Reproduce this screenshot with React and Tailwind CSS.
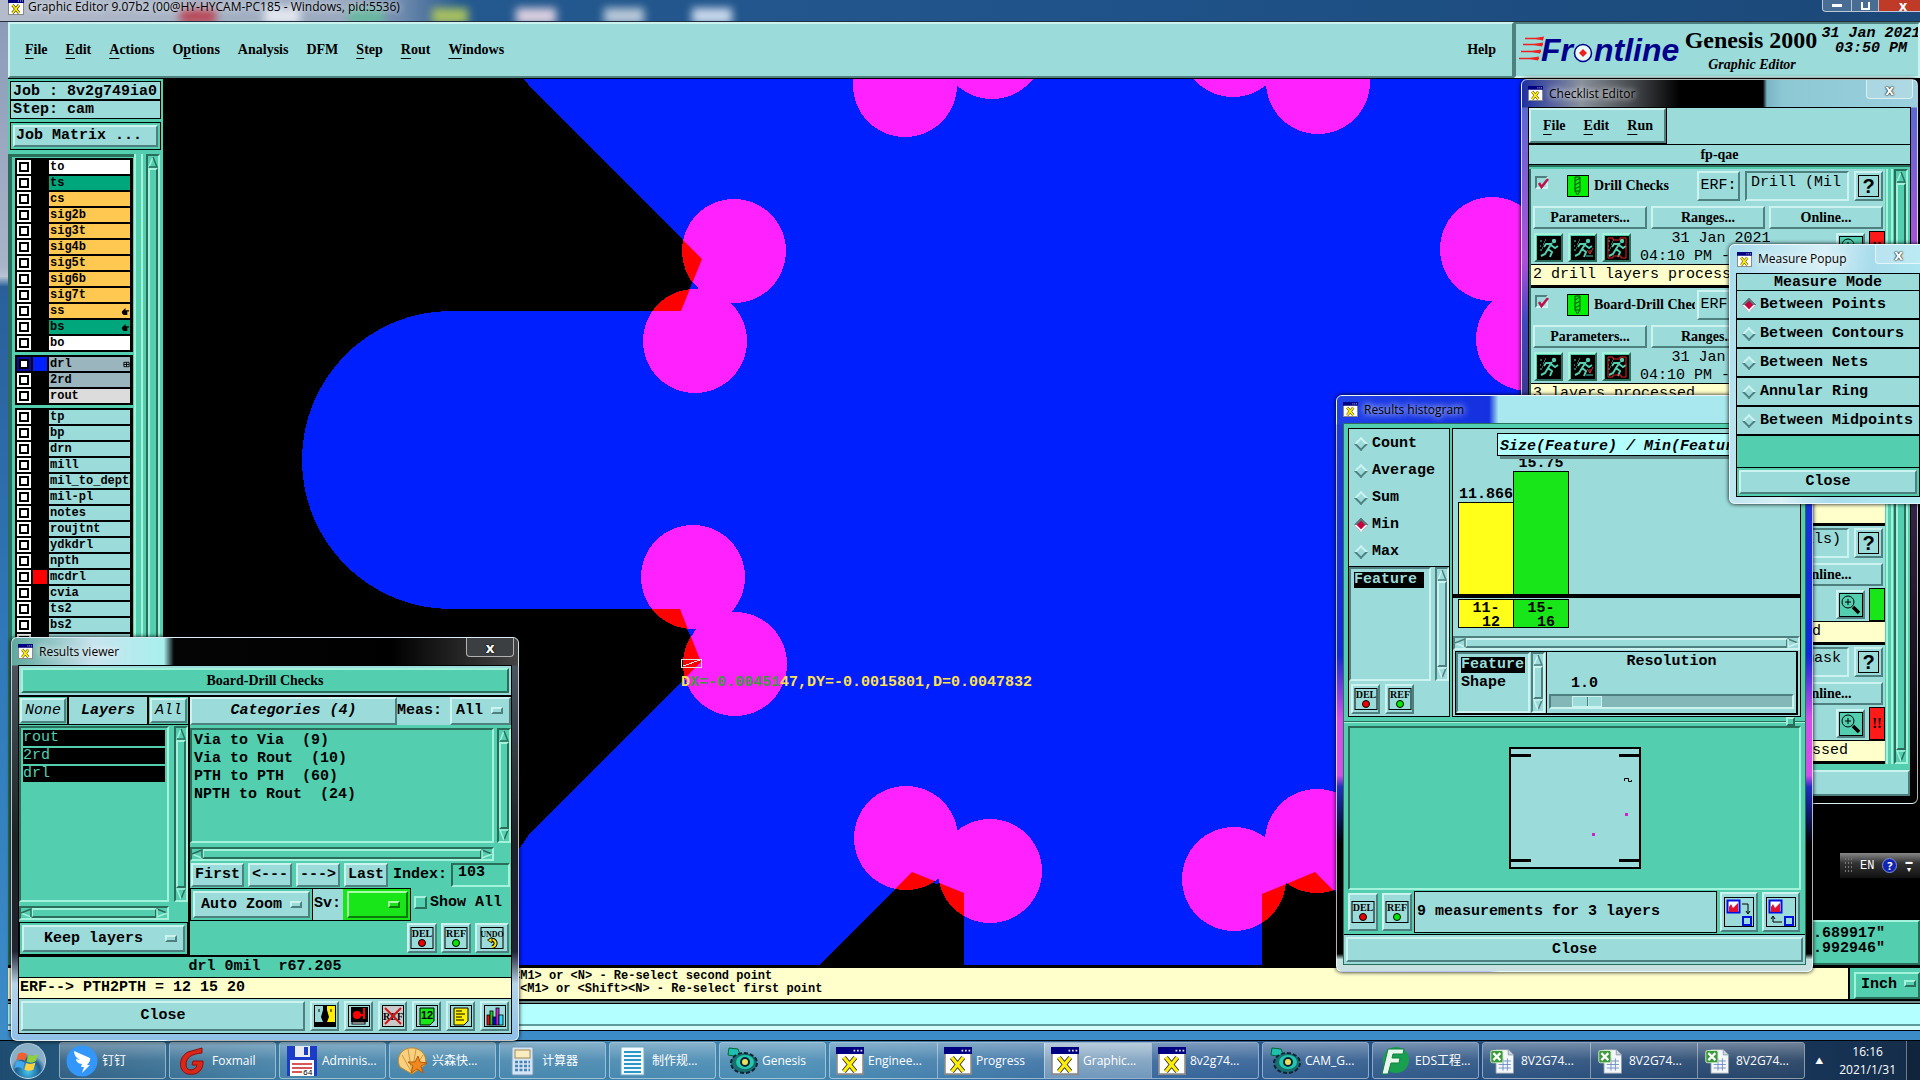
import { clsx } from "clsx";

const mono = "font-['Liberation_Mono',monospace] text-[15px] leading-[18px]";
const serif = "font-['Liberation_Serif',serif] text-[14px] leading-[18px] font-bold";
const sans = "font-['Open_Sans','Noto_Sans_CJK_SC',sans-serif]";

const raised = "border-2 border-t-[#cdf3f1] border-l-[#cdf3f1] border-b-[#4e807f] border-r-[#4e807f] bg-[#9bdbda]";
const sunken = "border-2 border-t-[#4e807f] border-l-[#4e807f] border-b-[#cdf3f1] border-r-[#cdf3f1] bg-[#9bdbda]";
const raisedTeal = "border-2 border-t-[#a3f2dc] border-l-[#a3f2dc] border-b-[#2a6d5b] border-r-[#2a6d5b] bg-[#53cfb0]";
const sunkenTeal = "border-2 border-t-[#2a6d5b] border-l-[#2a6d5b] border-b-[#a3f2dc] border-r-[#a3f2dc] bg-[#53cfb0]";

const layerGroups = [
  [
    { name: "to", color: "bg-white" },
    { name: "ts", color: "bg-[#00a67c]" },
    { name: "cs", color: "bg-[#ffc850]" },
    { name: "sig2b", color: "bg-[#ffc850]" },
    { name: "sig3t", color: "bg-[#ffc850]" },
    { name: "sig4b", color: "bg-[#ffc850]" },
    { name: "sig5t", color: "bg-[#ffc850]" },
    { name: "sig6b", color: "bg-[#ffc850]" },
    { name: "sig7t", color: "bg-[#ffc850]" },
    { name: "ss", color: "bg-[#ffc850]", mark: "hand" },
    { name: "bs", color: "bg-[#00a67c]", mark: "hand" },
    { name: "bo", color: "bg-white" },
  ],
  [
    { name: "drl", color: "bg-[#9bb5be]", swatch: "bg-[#001fff]", mark: "grid", active: true },
    { name: "2rd", color: "bg-[#9bb5be]" },
    { name: "rout", color: "bg-[#dcdcdc]" },
  ],
  [
    "tp", "bp", "drn", "mill", "mil_to_depth", "mil-pl", "notes", "roujtnt",
    "ydkdrl", "npth", "mcdrl", "cvia", "ts2", "bs2", "map",
  ].map((name) => ({
    name,
    color: "bg-[#9bdbda]",
    swatch: name === "mcdrl" ? "bg-[#ff0000]" : undefined,
  })),
];

const checks = [
  { name: "Drill Checks", erf: "Drill (Mils)", msg: "2 drill layers processed", flag: "red" },
  { name: "Board-Drill Checks", erf: "Outer (Mils)", msg: "3 layers processed", flag: "red" },
  { name: "Signal Layer Checks", erf: "Outer", msg: "", flag: "red" },
  { name: "SMD Checks", erf: "SMD (Mils)", msg: "10 drill/signal layers processed", flag: "green" },
  { name: "Solder Mask Checks", erf: "Soldermask", msg: "2 solder mask layers were processed", flag: "red" },
];

function Triangle({ dir, teal }) {
  const turn = { up: "", right: "rotate-90", down: "rotate-180", left: "-rotate-90" }[dir];
  const hi = teal ? "#a3f2dc" : "#cdf3f1";
  const lo = teal ? "#2a6d5b" : "#4e807f";
  const flip = dir === "down" || dir === "right";
  return (
    <svg viewBox="0 0 10 12" className={clsx("w-[10px] h-3 shrink-0", turn)}>
      <path d="M5 1 L1 11 H9 Z" fill={teal ? "#53cfb0" : "#9bdbda"} />
      <path d="M5 1 L1 11" stroke={flip ? lo : hi} strokeWidth="1.5" />
      <path d="M5 1 L9 11 H1" fill="none" stroke={flip ? hi : lo} strokeWidth="1.5" />
    </svg>
  );
}

function VScroll({ teal, className }) {
  return (
    <div className={clsx("w-[14px] shrink-0 flex flex-col items-center", teal ? sunkenTeal : sunken, className)}>
      <Triangle dir="up" teal={teal} />
      <div className={clsx("flex-1 w-full", teal ? raisedTeal : raised)} />
      <Triangle dir="down" teal={teal} />
    </div>
  );
}

function HScroll({ teal, className }) {
  return (
    <div className={clsx("h-[14px] shrink-0 flex items-center", teal ? sunkenTeal : sunken, className)}>
      <Triangle dir="left" teal={teal} />
      <div className={clsx("flex-1 h-full", teal ? raisedTeal : raised)} />
      <Triangle dir="right" teal={teal} />
    </div>
  );
}

function XIcon({ className = "size-4" }) {
  return (
    <svg viewBox="0 0 16 16" className={clsx("shrink-0", className)}>
      <rect x="0.5" y="0.5" width="15" height="15" fill="#fff" stroke="#888" />
      <rect x="0" y="0" width="16" height="4" fill="#000080" />
      <path d="M10 2h1M12 2h1M14 2h1" stroke="#ddd" />
      <path d="M4.5 6 L11 14 M11 6 L4.5 14" stroke="#333" strokeWidth="2.8" />
      <path d="M4.5 6 L11 14 M11 6 L4.5 14" stroke="#ffee00" strokeWidth="1.8" />
    </svg>
  );
}

function GlassWindow({ title, className, children, closeClass, headClass = "h-[27px]", iconClass }) {
  return (
    <section className={clsx("absolute isolate rounded-[6px] border border-white/70 shadow-[0_0_4px_#000] px-[6px] pb-[6px]", className)}>
      <header className={clsx("flex items-center gap-[6px] relative", headClass)}>
        <XIcon className={clsx("size-[15px]", iconClass)} />
        <h2 className={clsx(sans, "text-[12px] text-black [text-shadow:0_0_6px_#fff,0_0_8px_#fff9]")}>{title}</h2>
        <button
          aria-label="Close window"
          className={clsx("absolute top-0 h-[19px] rounded-b-[4px] border border-t-0 border-white/60 text-white text-[15px] leading-[14px] font-bold [text-shadow:0_0_2px_#000,0_0_1px_#000]", sans, closeClass)}
        >
          x
        </button>
      </header>
      {children}
    </section>
  );
}

function OptionMenu({ label, value, className, bevel = raised, bar = raised }) {
  return (
    <div className={clsx("relative", className)}>
      <select
        aria-label={label}
        className={clsx("appearance-none size-full font-bold text-black outline-none px-2 text-left", mono, bevel)}
      >
        <option>{value}</option>
      </select>
      <span className={clsx("absolute right-2 top-1/2 -mt-1 w-3 h-[7px] pointer-events-none", bar)} />
    </div>
  );
}

function DiamondRadio({ group, label, checked }) {
  return (
    <label className="flex items-center gap-[6px] pl-1">
      <input
        type="radio"
        name={group}
        defaultChecked={checked}
        className="appearance-none size-[10px] rotate-45 shrink-0 ml-[3px] border-2 border-t-[#cdf3f1] border-l-[#cdf3f1] border-b-[#4e807f] border-r-[#4e807f] checked:bg-[#c8003c] checked:border-t-[#4e807f] checked:border-l-[#4e807f] checked:border-b-[#e8f8f8] checked:border-r-[#e8f8f8]"
      />
      <span className="whitespace-nowrap">{label}</span>
    </label>
  );
}

function TagButton({ tag, dot, className }) {
  return (
    <button className={clsx("grid place-items-center", raised, className)}>
      <svg viewBox="0 0 24 24" className="size-6">
        <rect x="1" y="1.5" width="22" height="21" fill="none" stroke="#000" />
        <text x="12" y="11" textAnchor="middle" fontSize={tag.length > 3 ? 8 : 10} fontFamily="Liberation Serif">{tag}</text>
        {dot ? (
          <circle cx="12" cy="17" r="3.5" fill={dot} stroke="#000" />
        ) : (
          <>
            <path d="M10 14 C16 12 18 20 12 21" fill="none" stroke="#000" strokeWidth="4" />
            <path d="M10 14 C16 12 18 20 12 21" fill="none" stroke="#ffe600" strokeWidth="2" />
            <path d="M12 11.5 L7.5 14 L12 17 Z" fill="#ffe600" stroke="#000" strokeWidth="0.8" />
          </>
        )}
      </svg>
    </button>
  );
}

function LayerRow({ layer }) {
  return (
    <li className="flex h-[14px] gap-[2px]">
      <label className={clsx("w-[14px] grid place-items-center", layer.active ? "bg-[#0a0aa0]" : "bg-white")}>
        <input type="checkbox" aria-label={layer.name} className="appearance-none size-[10px] border-2 border-black bg-white" />
      </label>
      <span className={clsx("w-[14px]", layer.swatch)} />
      <button className={clsx("w-[81px] flex items-center justify-between overflow-hidden pl-px text-left font-bold text-[12px] leading-[14px]", layer.color)}>
        <span>{layer.name}</span>
        {layer.mark === "hand" && (
          <svg viewBox="0 0 10 10" className="size-[9px] shrink-0">
            <path d="M1 5 L5 1 L5 3.5 H9 V5 H7 V9 H3 L1 7 Z" fill="#000" />
          </svg>
        )}
        {layer.mark === "grid" && (
          <svg viewBox="0 0 8 8" className="size-[7px] shrink-0">
            <path d="M1 1.5H7V6.5H1Z M4 1.5V6.5 M1 4H7" fill="none" stroke="#000" />
          </svg>
        )}
      </button>
    </li>
  );
}

function LayerPanel() {
  return (
    <aside className={clsx("w-[155px] shrink-0 bg-[#53cfb0] flex flex-col overflow-hidden", mono)}>
      <div className="m-[2px] mb-0 border border-black bg-[#9bdbda] font-bold">
        <p className="h-[19px] pl-[2px] border-b-2 border-black leading-[19px] whitespace-nowrap">Job : 8v2g749ia0</p>
        <p className="h-[17px] pl-[2px] leading-[18px]">Step: cam</p>
      </div>
      <div className="mx-[2px] mt-[3px] border border-black p-[2px]">
        <button className={clsx("w-full h-[22px] font-bold text-left pl-px leading-[18px]", raised)}>Job Matrix ...</button>
      </div>
      <div className="flex-1 min-h-0 mt-[4px] flex">
        <div className="flex-1 min-w-0 overflow-hidden border-l-[4px] border-t-[3px] border-[#2a6d5b] pt-px pl-[3px]">
          <ul className="flex flex-col gap-[3px]">
            {layerGroups.map((group, i) => (
              <li key={i} className="bg-black p-[2px] w-[118px]">
                <ul className="flex flex-col gap-[2px]">
                  {group.map((layer) => <LayerRow key={layer.name} layer={layer} />)}
                </ul>
              </li>
            ))}
          </ul>
        </div>
        <div className="w-[9px] border-l-2 border-r-2 border-[#a3f2dc]" />
        <VScroll teal className="ml-[3px] mr-[3px]" />
      </div>
    </aside>
  );
}

const pads = [
  [734, 251], [695, 341], [905, 85], [992, 47], [1233, 45], [1318, 82],
  [1492, 249], [1528, 339], [693, 577], [735, 664], [906, 838], [990, 871],
  [1234, 879], [1317, 841],
];

const voids = [
  "M163 79 H524 L532 89 L702 259 L681 311 H451 A149 149 0 0 0 451 609 H680 L701 662 L530 833 L440 965 H163 Z",
  "M820 965 L912 872 L964 893 V965 Z",
  "M1262 965 V894 L1315 872 L1408 965 Z",
];

function BoardCanvas() {
  return (
    <svg
      viewBox="163 79 1437 886"
      preserveAspectRatio="xMinYMin slice"
      shapeRendering="crispEdges"
      className="flex-1 min-w-0 h-full bg-[#001fff]"
    >
      <defs>
        <clipPath id="void-area">
          {voids.map((d) => <path key={d} d={d} />)}
        </clipPath>
      </defs>
      {voids.map((d) => <path key={d} d={d} fill="#000" />)}
      {pads.map(([x, y]) => <circle key={x} cx={x} cy={y} r="52" fill="#ff22ff" />)}
      <g clipPath="url(#void-area)">
        {pads.map(([x, y]) => <circle key={x} cx={x} cy={y} r="52" fill="#ff0000" />)}
      </g>
      <path d="M691 288 H698 L692 281 Z M687 629 H696 L691 637 Z M932 883 L938 880 V884 Z" fill="#001fff" />
      <path d="M681 659 H701 V667 H681 Z M683 666 L700 660" fill="none" stroke="#ddd" />
      <text x="681" y="686" fontFamily="Liberation Mono" fontSize="15" fontWeight="bold" fill="#ffe14d">
        D<tspan fill="#3c9a3c">X=-0.00451</tspan>47,DY=-0.0015801,D=0.0047832
      </text>
    </svg>
  );
}

const menus = ["_File", "_Edit", "_Actions", "O_ptions", "Analysis", "DFM", "_Step", "_Rout", "_Windows"];

function MenuLabel({ text }) {
  const i = text.indexOf("_");
  if (i < 0) return text;
  return (
    <>
      {text.slice(0, i)}
      <span className="underline underline-offset-4 decoration-1">{text[i + 1]}</span>
      {text.slice(i + 2)}
    </>
  );
}

function Logo() {
  return (
    <svg viewBox="0 0 164 32" className="w-[164px] h-8 shrink-0">
      <path d="M6 4.5H24M4 10.5H24M2 17.5H22M0 24.5H20" stroke="#f02020" strokeWidth="1.5" />
      <path d="M14 4.5l11-2-1 4z M12 10.5l12-2-1 4z M10 17.5l12-2-1 4z M8 24.5l12-2-1 4z" fill="#f02020" />
      <g fontFamily="Liberation Sans" fontSize="32" fontWeight="bold" fontStyle="italic" fill="#00008b">
        <text x="22" y="27">Fr</text>
        <text x="75" y="27">ntline</text>
      </g>
      <circle cx="64" cy="19" r="8.5" fill="#e8fbfb" stroke="#00008b" strokeWidth="1.5" />
      <path d="M64 15l4 4-4 4-4-4z" fill="#f02020" />
    </svg>
  );
}

function ResultsViewer() {
  const rows = ["Via to Via  (9)", "Via to Rout  (10)", "PTH to PTH  (60)", "NPTH to Rout  (24)"];
  return (
    <GlassWindow
      title="Results viewer"
      className="left-[11px] top-[637px] w-[508px] bg-[linear-gradient(#0000_27px,#4a5560_28px,#1c2226_50%,#223_78%,#b8d4e8_86%,#8fc0e8),linear-gradient(90deg,#5fa89e_0,#c8e4ee_16%,#a8f0ee_30%,#050505_32%,#000_75%,#444)]"
      closeClass="-right-[2px] w-[48px] bg-[#3c3f41]"
    >
      <div className={clsx("bg-black p-px flex flex-col gap-px font-bold", mono)}>
        <div className="bg-[#9bdbda] p-[2px] h-[29px]">
          <h3 className={clsx("h-full grid place-items-center", serif, raisedTeal)}>Board-Drill Checks</h3>
        </div>
        <div className="flex gap-[2px] h-[259px] pt-px">
          <div className="w-[169px] flex flex-col bg-[#53cfb0]">
            <div className="h-7 flex gap-[2px] bg-black pb-px">
              <div className="bg-[#53cfb0] p-px"><button className={clsx("h-full w-[46px] italic font-normal", raised)}>None</button></div>
              <h4 className="flex-1 bg-[#9bdbda] grid place-items-center italic">Layers</h4>
              <div className="bg-[#53cfb0] p-px"><button className={clsx("h-full w-[37px] italic font-normal", raised)}>All</button></div>
            </div>
            <div className="flex-1 flex justify-between pt-px">
              <ul className={clsx("w-[150px] p-[2px] flex flex-col gap-[2px] text-[#53cfb0] font-normal", sunkenTeal)}>
                {["rout", "2rd", "drl"].map((n) => (
                  <li key={n} className="bg-black h-4 leading-4">{n}</li>
                ))}
              </ul>
              <VScroll teal />
            </div>
            <HScroll teal className="w-[150px] mt-1" />
            <div className="mt-[2px] border border-black p-[2px] h-[33px]">
              <OptionMenu label="Layer mode" value="Keep layers" className="size-full [&_select]:pl-5" />
            </div>
          </div>
          <div className="flex-1 min-w-0 flex flex-col bg-[#53cfb0]">
            <div className="h-7 flex bg-[#9bdbda]">
              <button className={clsx("w-[207px] italic", raised)}>Categories (4)</button>
              <span className="flex-1 leading-7">Meas:</span>
              <OptionMenu label="Measurement filter" value="All" className="w-[61px] [&_select]:px-1" />
            </div>
            <div className="flex-1 flex justify-between pt-[3px]">
              <ul className={clsx("w-[304px] pl-[2px] pt-[2px] whitespace-pre", sunkenTeal)}>
                {rows.map((r) => <li key={r}>{r}</li>)}
              </ul>
              <VScroll teal />
            </div>
            <HScroll teal className="w-[304px] mt-1" />
            <div className="h-[24px] mt-[2px] px-px flex gap-1">
              <button className={clsx("w-[53px]", raised)}>First</button>
              <button className={clsx("w-[44px]", raised)}>&lt;---</button>
              <button className={clsx("w-[44px]", raised)}>---&gt;</button>
              <button className={clsx("w-[44px]", raised)}>Last</button>
              <label htmlFor="index" className="leading-6 pl-px">Index:</label>
              <input id="index" defaultValue="103" className={clsx("flex-1 min-w-0 font-bold pl-[5px] pb-1 outline-none", mono, sunkenTeal)} />
            </div>
            <div className="h-[33px] mt-px flex">
              <div className="border border-black p-[2px] w-[123px]">
                <OptionMenu label="Zoom mode" value="Auto Zoom" className="size-full [&_select]:px-[6px]" />
              </div>
              <div className="border border-l-0 border-black flex bg-[#9bdbda]">
                <span className="leading-[30px] w-[30px] pl-px">Sv:</span>
                <div className="bg-[#19e619] p-[2px] pl-1 w-[67px]">
                  <OptionMenu
                    label="Severity"
                    value=""
                    className="size-full"
                    bevel="border-2 border-t-[#a8ffa8] border-l-[#a8ffa8] border-b-[#0c7a0c] border-r-[#0c7a0c] bg-[#19e619]"
                    bar="border-2 border-t-[#a8ffa8] border-l-[#a8ffa8] border-b-[#0c7a0c] border-r-[#0c7a0c] bg-[#19e619]"
                  />
                </div>
              </div>
              <label className="flex items-center gap-[3px] pl-[3px] pb-1">
                <input type="checkbox" className={clsx("appearance-none size-[13px]", raisedTeal)} />
                Show All
              </label>
            </div>
            <div className="h-[34px] pb-[2px] flex justify-end gap-1 pr-[2px] pt-[2px]">
              <TagButton tag="DEL" dot="#e80000" className="w-[30px]" />
              <TagButton tag="REF" dot="#00e800" className="w-[30px]" />
              <TagButton tag="UNDO" className="w-[34px]" />
            </div>
          </div>
        </div>
        <p className="h-5 mt-px bg-[#53cfb0] text-center leading-5 whitespace-pre">drl 0mil  r67.205</p>
        <p className="h-5 bg-[#ffffcc] pl-px leading-5">ERF--&gt; PTH2PTH = 12 15 20</p>
        <div className="h-[34px] bg-[#9bdbda] flex gap-[5px] p-[2px]">
          <button className={clsx("flex-1", raised)}>Close</button>
          <button aria-label="Compare" className={clsx("w-[29px] grid place-items-center", raised)}>
            <svg viewBox="0 0 22 22" className="size-[22px]">
              <rect width="22" height="22" fill="#000" />
              <path d="M1 1H9V5L7 12L9 17H1Z" fill="#9bdbda" />
              <path d="M13 1H21V17H13L15 12L13 5Z" fill="#ffee00" />
              <path d="M5 4v3M17 4v3" stroke="#000" />
            </svg>
          </button>
          <button aria-label="Stop" className={clsx("w-[29px] grid place-items-center", raised)}>
            <svg viewBox="0 0 22 22" className="size-[22px]">
              <rect x="0.5" y="0.5" width="21" height="21" fill="#9bdbda" stroke="#000" />
              <rect x="3" y="2" width="17" height="15" fill="#000" />
              <circle cx="9" cy="10" r="4" fill="#f00" />
              <path d="M9 10H15M16 3V14" stroke="#f00" strokeWidth="2" />
              <rect x="4" y="17" width="13" height="2" fill="#fff" stroke="#000" />
            </svg>
          </button>
          <button aria-label="Clear references" className={clsx("w-[29px] grid place-items-center", raised)}>
            <svg viewBox="0 0 22 22" className="size-[22px]">
              <rect x="0.5" y="0.5" width="21" height="21" fill="#c9c9c9" stroke="#000" />
              <text x="11" y="15" textAnchor="middle" fontSize="10" fontFamily="Liberation Serif">REF</text>
              <path d="M3 3L19 19M19 3L3 19" stroke="#d01515" strokeWidth="2" />
            </svg>
          </button>
          <button aria-label="Numbering" className={clsx("w-[29px] grid place-items-center", raised)}>
            <svg viewBox="0 0 22 22" className="size-[22px]">
              <rect x="0.5" y="0.5" width="21" height="21" fill="#9bdbda" stroke="#000" />
              <path d="M4 3H18V16L14 20H4Z" fill="#19e619" stroke="#000" />
              <text x="11" y="14" textAnchor="middle" fontSize="11" fontWeight="bold" fontFamily="Liberation Sans">12</text>
            </svg>
          </button>
          <button aria-label="Report" className={clsx("w-[29px] grid place-items-center", raised)}>
            <svg viewBox="0 0 22 22" className="size-[22px]">
              <rect x="0.5" y="0.5" width="21" height="21" fill="#9bdbda" stroke="#000" />
              <path d="M4 3H18V16L14 20H4Z" fill="#ffee00" stroke="#000" />
              <path d="M6 6H12M6 9H15M6 12H12M6 15H14" stroke="#000" />
            </svg>
          </button>
          <button aria-label="Histogram" className={clsx("w-[29px] grid place-items-center", raised)}>
            <svg viewBox="0 0 22 22" className="size-[22px]">
              <rect x="0.5" y="0.5" width="21" height="21" fill="#9bdbda" stroke="#000" />
              <g stroke="#000" strokeWidth="0.8">
                <rect x="3" y="10" width="3" height="10" fill="#f00" />
                <rect x="6" y="6" width="3" height="14" fill="#19c819" />
                <rect x="9" y="12" width="3" height="8" fill="#00f" />
                <rect x="12" y="3" width="3" height="17" fill="#d020d0" />
                <rect x="15" y="10" width="4" height="10" fill="#20e0ff" />
              </g>
            </svg>
          </button>
        </div>
      </div>
    </GlassWindow>
  );
}

function RunnerIcon({ kind }) {
  return (
    <button aria-label={kind} className={clsx("size-[29px] grid place-items-center", raisedTeal)}>
      <svg viewBox="0 0 24 24" className="size-6">
        <rect width="24" height="24" fill="#000" />
        <circle cx="17" cy="5" r="2.2" fill="#53cfb0" />
        <path d="M15 7L11 13L15 16L13 21M11 13L8 18L4 20M14 8L9 8L7 11M14 9L18 12L21 10" fill="none" stroke="#53cfb0" strokeWidth="2" />
        <path d="M3 5h2M6 8h1M3 10h1M8 4h1M3 14h2M7 6h1M5 12h1" stroke="#53cfb0" />
        {kind === "Run selection" && (
          <>
            <path d="M15 20H22" stroke="#53cfb0" />
            <path d="M16 14l3 4m3-6l-3 6v-4" stroke="#d03030" fill="none" />
          </>
        )}
        {kind === "Run area" && <path d="M3 2H8V4H15V2H21V22H16V20H8V22H3Z" fill="none" stroke="#e02020" />}
      </svg>
    </button>
  );
}

function CheckCard({ check }) {
  const id = check.name.replaceAll(" ", "-");
  return (
    <article className="h-[119px] pt-[2px] flex flex-col border-b-[3px] border-black bg-[#9bdbda]">
      <div className="h-[30px] flex items-center pl-1 pr-[2px]">
        <label className={clsx("size-[13px] mb-2 grid place-items-center relative", sunken)}>
          <input type="checkbox" defaultChecked aria-label={`Enable ${check.name}`} className="absolute inset-0 appearance-none" />
          <svg viewBox="0 0 12 12" className="size-3 pointer-events-none">
            <path d="M2 5L4.5 9L11 1" fill="none" stroke="#c0104a" strokeWidth="2.5" />
          </svg>
        </label>
        <svg viewBox="0 0 22 22" className="size-[22px] shrink-0 ml-[19px]">
          <rect x="0.5" y="0.5" width="21" height="21" fill="#00f000" stroke="#000" />
          <path d="M8 2H13V16L10.5 20L8 16Z M8 6L13 3M8 10L13 7M8 14L13 11M8 16H13" fill="none" stroke="#041" />
        </svg>
        <h3 className={clsx("ml-[5px] flex-1 min-w-0 overflow-hidden whitespace-nowrap", serif)}>{check.name}</h3>
        <label htmlFor={id} className={clsx("w-[43px] h-full grid place-items-center ml-[2px]", mono, raised)}>ERF:</label>
        <input id={id} defaultValue={check.erf} className={clsx("ml-[5px] w-[104px] h-full pl-1 pr-[6px] pb-2 outline-none", mono, sunken)} />
        <button className={clsx("ml-[5px] w-[29px] h-full p-[2px] font-['Liberation_Sans',sans-serif] font-bold text-[20px] leading-[18px]", raised)}>
          <span className="block border border-black h-full leading-5">?</span>
        </button>
      </div>
      <div className={clsx("h-[23px] mt-[5px] px-[2px] grid grid-cols-3 gap-1", serif)}>
        <button className={raised}>Parameters...</button>
        <button className={raised}>Ranges...</button>
        <button className={raised}>Online...</button>
      </div>
      <div className="h-[33px] mt-[2px] pl-[3px] flex items-center gap-[5px]">
        <RunnerIcon kind="Run all" />
        <RunnerIcon kind="Run selection" />
        <RunnerIcon kind="Run area" />
        <p className={clsx("w-[170px] text-center leading-[15px]", mono)}>
          31 Jan 2021<br />04:10 PM - 04:10PM
        </p>
        <button aria-label="View results" className={clsx("ml-auto w-[29px] h-[29px] grid place-items-center", raised)}>
          <svg viewBox="0 0 24 24" className="size-6">
            <rect x="0.5" y="0.5" width="23" height="23" fill="#53cfb0" stroke="#000" />
            <circle cx="9" cy="9" r="6" fill="none" stroke="#000" />
            <path d="M6 9H12M9 6V12" stroke="#000" />
            <path d="M14 14L20 20" stroke="#000" strokeWidth="3.5" />
          </svg>
        </button>
        <span className={clsx("w-4 h-full border border-black grid place-items-center -ml-px", serif, check.flag === "red" ? "bg-[#ff1a1a]" : "bg-[#19e619]")}>
          {check.flag === "red" ? "!!" : ""}
        </span>
      </div>
      <p className={clsx("flex-1 border-t border-black bg-[#ffffcc] pl-[2px] pt-px overflow-hidden whitespace-nowrap", mono)}>{check.msg}</p>
    </article>
  );
}

function ChecklistEditor() {
  return (
    <GlassWindow
      title="Checklist Editor"
      className="left-[1521px] top-[79px] w-[397px] bg-[linear-gradient(#0000_27px,#5a6ad0_28px,#b050d8_180px,#4048c0_240px,#324_60%,#000),linear-gradient(90deg,#2030a0_0,#8a929c_15%,#3a3d40_30%,#000_40%,#000_61%,#78b4c4_62%,#8cc8d4_66%,#9cd0de)]"
      closeClass="-right-[2px] w-[47px] bg-white/20"
    >
      <div className="bg-[#9bdbda] border border-black">
        <nav className={clsx("w-[137px] h-[35px] flex items-center gap-[18px] pl-3 outline-1 outline-black", serif, raised)}>
          {["_File", "_Edit", "_Run"].map((m) => <button key={m}><MenuLabel text={m} /></button>)}
        </nav>
        <p className={clsx("h-[21px] mt-px border-y border-black text-center leading-[19px]", serif)}>fp-qae</p>
        <div className="flex bg-[#53cfb0] pt-[2px] border-t-2 border-[#2a6d5b]">
          <div className="flex-1 min-w-0 border-l-2 border-[#2a6d5b]">
            {checks.map((c) => <CheckCard key={c.name} check={c} />)}
          </div>
          <div className="w-[7px] mx-px border-x-2 border-[#a3f2dc]" />
          <VScroll teal className="mr-[2px]" />
        </div>
        <div className="bg-[#53cfb0] pt-[6px] flex">
          <button className={clsx("flex-1 h-[26px] font-bold", mono, raised)}>Close</button>
        </div>
      </div>
    </GlassWindow>
  );
}

const bars = [
  { value: "11.866", from: "11-", to: "12", height: 92, color: "bg-[#ffff19]" },
  { value: "15.75", from: "15-", to: "16", height: 123, color: "bg-[#19e619]" },
];

function HistogramWindow() {
  return (
    <GlassWindow
      title="Results histogram"
      className="left-[1336px] top-[395px] w-[477px] bg-[linear-gradient(#0000_28px,#2038d8_29px,#1028d8_45%,#d050e8_56%,#d050e8_66%,#2030c0_68%,#000_78%,#000_97%,#c8e0e0_98%),linear-gradient(90deg,#2040e8_0,#1430e0_32%,#a8e8ee_34%,#a8e8ee)]"
      closeClass="-right-[2px] w-[47px] bg-white/20"
    >
      <div className={clsx("bg-[#53cfb0] border border-[#2a6d5b] font-bold pt-1", mono)}>
        <div className="flex gap-[2px] px-1 h-[289px]">
          <div className="w-[102px] border border-black bg-[#9bdbda] flex flex-col">
            <fieldset className="h-[138px] shrink-0 pt-px border-b border-black">
              {["Count", "Average", "Sum", "Min", "Max"].map((s) => (
                <div key={s} className="h-[27px] grid items-center">
                  <DiamondRadio group="stat" label={s} checked={s === "Min"} />
                </div>
              ))}
            </fieldset>
            <div className="flex-1 flex justify-between">
              <ul className={clsx("w-[82px] p-[3px]", sunken)}>
                <li className="bg-black text-[#9bdbda] leading-4 mr-[2px]">Feature</li>
              </ul>
              <VScroll />
            </div>
            <div className="h-[34px] flex gap-[5px] p-[2px] mt-px">
              <TagButton tag="DEL" dot="#e80000" className="w-[29px]" />
              <TagButton tag="REF" dot="#00e800" className="w-[29px]" />
            </div>
          </div>
          <div className="flex-1 min-w-0 bg-[#9bdbda] border border-black flex flex-col">
            <div className="relative h-[169px] border-b-4 border-black flex items-end pl-[5px]">
              <p className="absolute left-[44px] top-[4px] w-[290px] h-[23px] pl-[2px] bg-[#b3ffff] border border-black shadow-[3px_3px_0_#5f8a8a] italic whitespace-nowrap leading-[26px]">
                Size(Feature) / Min(Feature)
              </p>
              {bars.map((b) => (
                <div key={b.value} className="w-[56px] -mr-px flex flex-col items-center">
                  <span className="leading-[15px]">{b.value}</span>
                  <div className={clsx("w-full border border-b-0 border-black", b.color)} style={{ height: b.height }} />
                </div>
              ))}
            </div>
            <div className="flex pl-[5px] pt-px h-[38px]">
              {bars.map((b) => (
                <div key={b.value} className={clsx("w-[56px] h-[29px] -mr-px border border-black text-center leading-[14px] pt-[2px]", b.color)}>
                  <span className="block">{b.from}</span>
                  <span className="block pl-[10px]">{b.to}</span>
                </div>
              ))}
            </div>
            <HScroll />
            <div className="flex-1 min-h-0 mt-px mx-[2px] mb-px border border-r-2 border-b-2 border-black flex">
              <ul className={clsx("w-[74px] p-[3px] leading-4", sunken)}>
                <li className="bg-black text-[#9bdbda]">Feature</li>
                <li className="pt-[2px]">Shape</li>
              </ul>
              <VScroll className="mx-px" />
              <div className="flex-1 border-l border-black flex flex-col px-[2px] pt-px">
                <label htmlFor="resolution" className="text-center">Resolution</label>
                <output className="pl-[22px] pt-1">1.0</output>
                <input
                  id="resolution"
                  type="range"
                  min="0"
                  max="10"
                  defaultValue="1"
                  className="appearance-none mt-px h-[15px] w-full bg-[#84b8b8] border-2 border-t-[#4e807f] border-l-[#4e807f] border-b-[#cdf3f1] border-r-[#cdf3f1] [&::-webkit-slider-thumb]:appearance-none [&::-webkit-slider-thumb]:w-[30px] [&::-webkit-slider-thumb]:h-[11px] [&::-webkit-slider-thumb]:bg-[linear-gradient(90deg,#9bdbda_14px,#4e807f_14px,#4e807f_15px,#cdf3f1_15px,#9bdbda_16px)] [&::-webkit-slider-thumb]:border [&::-webkit-slider-thumb]:border-[#cdf3f1]"
                />
              </div>
            </div>
          </div>
        </div>
        <div className="h-[9px] flex items-center justify-end pr-[10px] relative">
          <span className="absolute inset-x-0 top-1 h-[2px] bg-[#2a6d5b] border-b border-[#a3f2dc]" />
          <span className={clsx("relative size-[9px]", raisedTeal)} />
        </div>
        <div className="mx-1">
          <div className={clsx("h-[164px] grid place-items-center", sunkenTeal)}>
            <svg viewBox="0 0 132 122" className="w-[132px] h-[122px]">
              <rect x="1" y="1" width="130" height="120" fill="#9bdbda" stroke="#000" strokeWidth="2" />
              <path d="M2 8.5H22M110 8.5H130M2 113.5H22M110 113.5H130" stroke="#000" strokeWidth="3" />
              <path d="M115.5 34V31.5H119.5V34.5H122.5V33" fill="none" stroke="#000" />
              <rect x="116" y="66" width="3" height="3" fill="#d020d0" />
              <rect x="83" y="86" width="3" height="3" fill="#d020d0" />
            </svg>
          </div>
          <div className="h-[42px] mt-px mb-px flex gap-[2px]">
            <TagButton tag="DEL" dot="#e80000" className="w-[30px] my-[2px]" />
            <TagButton tag="REF" dot="#00e800" className="w-[30px] my-[2px] ml-[2px]" />
            <p className="flex-1 border border-black bg-[#9bdbda] pl-[2px] leading-10">9 measurements for 3 layers</p>
            {["Export", "Import"].map((k) => (
              <button key={k} aria-label={k} className={clsx("w-[38px] my-px grid place-items-center ml-px mr-px", raised)}>
                <svg viewBox="0 0 32 32" className="size-8">
                  <rect x="1.5" y="1.5" width="29" height="29" fill="none" stroke="#000" />
                  <rect x="4.5" y="4.5" width="12" height="12" fill="#fff" stroke="#0010e0" strokeWidth="2" />
                  <path d="M6 16V11L8 8L10 12L13 9L15 7V16Z" fill="#e01030" />
                  <rect x="20" y="21" width="8" height="8" fill="#9bdbda" stroke="#0010e0" strokeWidth="2" />
                  {k === "Export" ? (
                    <path d="M19 8H25V17M23 15L25 18L27 15" fill="none" stroke="#000" />
                  ) : (
                    <path d="M17 26H8V21M6 23L8 20L10 23" fill="none" stroke="#000" />
                  )}
                </svg>
              </button>
            ))}
          </div>
        </div>
        <div className="border-t border-black bg-[#9bdbda] p-[2px] flex">
          <button className={clsx("flex-1 h-[25px]", raised)}>Close</button>
        </div>
      </div>
    </GlassWindow>
  );
}

function MeasurePopup() {
  return (
    <GlassWindow
      title="Measure Popup"
      className="left-[1729px] top-[244px] w-[198px] bg-[linear-gradient(100deg,#a8dcec,#d8f0f6_40%,#a8dcec_60%,#b0f0f4)]"
      headClass="h-7 pl-px"
      closeClass="-right-[2px] w-[47px] bg-white/20"
    >
      <div className={clsx("bg-[#53cfb0] border border-black border-b-0 font-bold", mono)}>
        <fieldset>
          <legend className="w-full h-[17px] leading-[18px] text-center bg-[#9bdbda] border-b border-black">Measure Mode</legend>
          {["Between Points", "Between Contours", "Between Nets", "Annular Ring", "Between Midpoints"].map((m, i) => (
            <div key={m} className="h-[29px] bg-[#9bdbda] border-b-2 border-black grid items-center">
              <DiamondRadio group="mode" label={m} checked={i === 0} />
            </div>
          ))}
        </fieldset>
        <div className="h-[31px]" />
        <div className="border-y border-black p-[2px]">
          <button className={clsx("w-full h-[24px]", raised)}>Close</button>
        </div>
      </div>
    </GlassWindow>
  );
}

const sheetIcon = (
  <svg viewBox="0 0 32 32" className="size-7">
    <path d="M8 3H22L28 9V30H8Z" fill="#f4f7fa" stroke="#8a9aa8" />
    <path d="M22 3V9H28" fill="#cdd8e2" stroke="#8a9aa8" />
    <path d="M11 16H25M11 20H25M11 24H25M16 13V27M21 13V27" stroke="#6a8ac0" />
    <rect x="2" y="4" width="14" height="14" rx="2" fill="#3c9a3c" stroke="#d8f0d0" />
    <path d="M5 7L13 15M13 7L5 15" stroke="#fff" strokeWidth="2.5" />
  </svg>
);

const gearIcon = (
  <svg viewBox="0 0 32 32" className="size-8">
    <path d="M3 3L12 4L15 12L2 10Z" fill="#20c0b0" stroke="#063" />
    <ellipse cx="18" cy="18" rx="13" ry="10" fill="#1a6e70" stroke="#123" strokeWidth="2" strokeDasharray="4 2" />
    <ellipse cx="19" cy="17" rx="9" ry="7" fill="#20c8b0" />
    <circle cx="19" cy="17" r="4" fill="#e8e060" stroke="#123" strokeWidth="2" />
  </svg>
);

const xTask = <XIcon className="size-7" />;

const tasks = [
  [{
    label: "钉钉",
    icon: (
      <svg viewBox="0 0 32 32" className="size-8">
        <circle cx="16" cy="16" r="15.5" fill="#3296fa" />
        <path d="M8 6L24 13C25 14 23 18 21 20H24L16 28L18 22H15L16 19C12 19 10 16 10 14L14 15C10 13 8 10 8 6Z" fill="#fff" />
      </svg>
    ),
  }],
  [{
    label: "Foxmail",
    icon: (
      <svg viewBox="0 0 32 32" className="size-8">
        <path d="M26 3L12 7C2 12 2 27 12 29C22 31 28 24 27 16H17L16 20H21C20 26 10 27 10 20C10 12 16 9 26 8Z" fill="#d8281c" stroke="#901008" />
      </svg>
    ),
  }],
  [{
    label: "Adminis...",
    icon: (
      <svg viewBox="0 0 32 32" className="size-8">
        <path d="M1 1H31V31H1Z" fill="#1a3cc8" />
        <rect x="9" y="1" width="15" height="11" fill="#e8ecf0" />
        <rect x="18" y="2" width="4" height="8" fill="#1a3cc8" />
        <rect x="4" y="15" width="24" height="16" fill="#fff" />
        <path d="M6 19H26M6 23H26M6 27H16" stroke="#c82020" strokeWidth="1.5" />
        <text x="17" y="30" fontSize="8" fontFamily="Liberation Mono">64</text>
      </svg>
    ),
  }],
  [{
    label: "兴森快...",
    icon: (
      <svg viewBox="0 0 32 32" className="size-8">
        <path d="M16 29L4 22C-1 12 6 4 14 3C24 2 32 10 29 20Z" fill="#f8d080" stroke="#c08828" />
        <path d="M16 28L6 10M16 28L12 4M16 28L20 4M16 28L27 10" stroke="#d09838" />
        <path d="M22 11L24 17L31 18L25 21L27 28L21 24L15 28L17 21L12 17L19 17Z" fill="#f08820" stroke="#b85a08" />
      </svg>
    ),
  }],
  [{
    label: "计算器",
    icon: (
      <svg viewBox="0 0 32 32" className="size-8">
        <rect x="6" y="2" width="21" height="28" rx="1" fill="#d4e6f4" stroke="#7898b8" />
        <rect x="9" y="5" width="15" height="8" fill="#f8ecc0" stroke="#a08850" />
        <path d="M9 17H24M9 21H24M9 25H24" stroke="#4880b8" strokeWidth="2.5" strokeDasharray="3 1.5" />
      </svg>
    ),
  }],
  [{
    label: "制作规...",
    icon: (
      <svg viewBox="0 0 32 32" className="size-8">
        <rect x="5" y="2" width="23" height="28" fill="#f4fafc" stroke="#70a8c0" />
        <path d="M8 7H25M8 11H25M8 15H25M8 19H25M8 23H25M8 27H25" stroke="#2898c8" strokeWidth="2" />
      </svg>
    ),
  }],
  [{ label: "Genesis", icon: gearIcon }],
  [
    { label: "Enginee...", icon: xTask },
    { label: "Progress", icon: xTask },
    { label: "Graphic...", icon: xTask, active: true },
    { label: "8v2g74...", icon: xTask },
  ],
  [{ label: "CAM_G...", icon: gearIcon }],
  [{
    label: "EDS工程...",
    icon: (
      <svg viewBox="0 0 32 32" className="size-8">
        <circle cx="17" cy="15" r="13" fill="#18a050" />
        <path d="M9 4H25L24 9H14L13 13H21L20 18H12L9 29H3Z" fill="#e8f8ec" stroke="#108040" />
      </svg>
    ),
  }],
  [
    { label: "8V2G74...", icon: sheetIcon },
    { label: "8V2G74...", icon: sheetIcon },
    { label: "8V2G74...", icon: sheetIcon },
  ],
];

function Taskbar() {
  return (
    <footer className={clsx("h-10 shrink-0 flex items-center gap-[3px] bg-[linear-gradient(90deg,#1d4c70,#3a7ca4_15%,#3f86b0_42%,#2c5f98_60%,#1c4270_85%,#142c48)] border-t border-black text-white text-[12px]", sans)}>
      <button aria-label="Start" className="w-[56px] shrink-0 grid place-items-center">
        <svg viewBox="0 0 40 38" className="w-10 h-[38px]">
          <defs>
            <radialGradient id="orb" cy="0.8">
              <stop offset="0" stopColor="#48c8f0" />
              <stop offset="0.7" stopColor="#1c5c90" />
              <stop offset="1" stopColor="#8ab0c8" />
            </radialGradient>
          </defs>
          <circle cx="20" cy="19" r="17.5" fill="url(#orb)" stroke="#c0d8e8" />
          <path d="M10 12Q14 9 19 12L17 19Q13 16 8.5 18Z" fill="#f06030" />
          <path d="M20.5 12.5Q25 15 30 12L28 19Q23 22 18.5 19.5Z" fill="#90d040" />
          <path d="M8 20Q12 18 16.5 20.5L15 27Q11 24 6.5 26.5Z" fill="#40a8f0" />
          <path d="M18 21Q23 23 27.5 20.5L25.5 27.5Q21 30 16.5 27.5Z" fill="#ffd040" />
        </svg>
      </button>
      {tasks.map((group) => (
        <div key={group[0].label + group.length} className="h-[37px] flex rounded-[3px] border border-white/50 overflow-hidden">
          {group.map((t, i) => (
            <button
              key={i}
              className={clsx(
                "flex items-center gap-1 pl-[6px] text-left whitespace-nowrap border-white/40",
                group.length > 1 ? "w-[107px]" : "w-[105px]",
                i > 0 && "border-l",
                t.active
                  ? "bg-[linear-gradient(#b8ccdc,#88a8c4_50%,#7098bc)]"
                  : "bg-[linear-gradient(#ffffff60,#ffffff20_50%,#ffffff10)]"
              )}
            >
              {t.icon}
              <span>{t.label}</span>
            </button>
          ))}
        </div>
      ))}
      <div className="ml-auto flex items-center h-full">
        <button aria-label="Show hidden icons" className="mr-[16px] text-[8px]">▲</button>
        <time className="text-center leading-[18px] mr-[10px]">16:16<br />2021/1/31</time>
        <button aria-label="Show desktop" className="w-[14px] h-full border-l border-white/40 bg-[#10243c]" />
      </div>
    </footer>
  );
}

export default function App() {
  return (
    <div className="relative h-screen overflow-hidden flex flex-col bg-[#1d4f80] text-black">
      <header className="relative h-[22px] shrink-0 overflow-hidden border-b border-[#203040] bg-[linear-gradient(90deg,#b4bccb_0,#9aa9bf_18%,#6d89ac_21%,#24598f_24%,#1f5288_60%,#1b4878)]">
        <div className="absolute inset-x-0 top-2 pl-[180px] flex gap-12 blur-[4px]">
          <span className="w-9 h-4 bg-[#b84a5a]" />
          <span className="w-9 h-4 bg-[#e4e8f0]" />
          <span className="w-9 h-4 bg-[#68b8a0]" />
          <span className="w-9 h-4 bg-[#a8c060]" />
          <span className="w-10 h-4 bg-[#dcd0e0]" />
          <span className="w-10 h-4 bg-[#b8c8d8]" />
          <span className="w-10 h-4 bg-[#c8d8ec]" />
        </div>
        <div className="relative flex items-center gap-1 pl-2 h-[14px]">
          <XIcon className="size-4" />
          <h1 className={clsx(sans, "text-[12px] leading-[14px] [text-shadow:0_0_6px_#fff]")}>
            Graphic Editor 9.07b2 (00@HY-HYCAM-PC185 - Windows, pid:5536)
          </h1>
        </div>
        <div className="absolute -right-2 top-0 h-3 flex rounded-b-[4px] border border-t-0 border-white/70 overflow-hidden text-white">
          <button aria-label="Minimize" className="w-7 grid place-items-center bg-white/20"><span className="w-[10px] h-[3px] bg-white" /></button>
          <button aria-label="Maximize" className="w-7 grid place-items-center border-x border-white/60 bg-white/20"><span className="w-[9px] h-2 border-2 border-t-0 border-white" /></button>
          <button aria-label="Close" className={clsx("w-12 bg-[#c03a28] text-[14px] leading-[6px] font-bold", sans)}>x</button>
        </div>
      </header>

      <main className="flex-1 min-h-0 flex flex-col pl-2 bg-[linear-gradient(#8c9cb8,#a8b4c8_24%,#b8c4d4_25%,#2a5f9a_26%,#3078b8_60%,#3c8cc8)]">
        <div className="h-[57px] shrink-0 flex border-b border-black bg-[#9bdbda]">
          <nav className={clsx("flex-1 flex items-center pl-[14px] pr-4 gap-[17px]", serif, raised)}>
            {menus.map((m) => <button key={m} className="px-px -mr-px"><MenuLabel text={m} /></button>)}
            <button className="ml-auto">Help</button>
          </nav>
          <div className={clsx("w-[406px] shrink-0 flex items-start pl-[3px] overflow-hidden", sunken)}>
            <div className="pt-[10px]"><Logo /></div>
            <div className="font-['Liberation_Serif',serif] font-bold text-center w-[136px] shrink-0">
              <p className="text-[24px] leading-8 whitespace-nowrap">Genesis 2000</p>
              <p className="text-[14px] leading-[18px] italic pl-[2px]">Graphic Editor</p>
            </div>
            <p className={clsx("w-[96px] shrink-0 ml-[4px] pt-[2px] flex flex-col items-center italic font-bold whitespace-nowrap", mono)}>
              <span className="leading-[15px]">31 Jan 2021</span>
              <span className="leading-[15px]">03:50 PM</span>
            </p>
          </div>
        </div>

        <div className="flex-1 min-h-0 flex">
          <LayerPanel />
          <BoardCanvas />
          <div className="w-[320px] shrink-0 bg-black flex flex-col justify-end">
            <div className="w-20 h-[25px] mb-[42px] self-end flex items-center gap-2 pl-1 bg-[linear-gradient(#888,#333_40%,#111)] text-white">
              <span className="w-2 h-[17px] bg-[radial-gradient(#777_1px,transparent_1px)] bg-[length:3px_4px]" />
              <span className="font-['Liberation_Mono',monospace] text-[12px]">EN</span>
              <button aria-label="Input help" className={clsx("size-[15px] rounded-full bg-[#1024b0] border border-[#8090e0] text-[11px] leading-3 font-bold", sans)}>?</button>
              <span className="text-[7px] leading-2 text-center">▬<br />▼</span>
            </div>
            <div className={clsx("h-[45px] pl-[202px] pt-1 font-bold", mono, raisedTeal)}>
              <p className="leading-[15px]">4.689917"</p>
              <p className="leading-[15px]">2.992946"</p>
            </div>
          </div>
        </div>

        <div className="h-[34px] shrink-0 flex border-t-[3px] border-black bg-[#ffffcc]">
          <div className="flex-1 pl-[505px] pt-[2px] font-['Liberation_Mono',monospace] text-[12px] leading-[13px] font-bold">
            <p>&lt;M1&gt; or &lt;N&gt; - Re-select second point</p>
            <p className="pl-[7px]">&lt;M1&gt; or &lt;Shift&gt;&lt;N&gt; - Re-select first point</p>
          </div>
          <div className="w-[72px] border-l-2 border-black bg-[#53cfb0] p-[2px] pl-1 pr-0">
            <OptionMenu label="Units" value="Inch" className="size-full [&_select]:px-[5px] [&>span]:right-1" bevel={raisedTeal} bar={raisedTeal} />
          </div>
        </div>
        <div className="h-[41px] shrink-0 border-t-2 border-black">
          <div className="border-t-2 border-[#6c8c8a] bg-[#d8ffff]">
            <input aria-label="Command line" className="block w-full h-[23px] border-t border-b-2 border-t-black border-b-[#5f9a9a] bg-[#b3ffff] outline-none" />
            <div className="h-[5px] border-b border-black" />
          </div>
        </div>
      </main>

      <Taskbar />

      <ResultsViewer />
      <ChecklistEditor />
      <HistogramWindow />
      <MeasurePopup />
    </div>
  );
}
